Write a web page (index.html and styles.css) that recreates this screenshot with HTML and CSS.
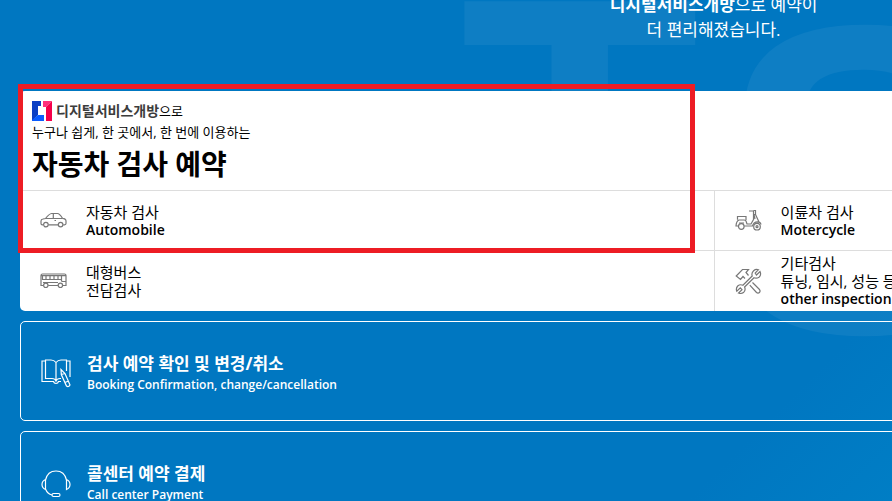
FILE: index.html
```html
<!DOCTYPE html>
<html lang="ko">
<head>
    <meta charset="UTF-8">
    <meta name="viewport" content="width=device-width, initial-scale=1.0">
    <title>자동차 검사 예약</title>
    <link rel="stylesheet" href="styles.css">
</head>
<body>
    <div class="page">
        <div class="watermark" aria-hidden="true"><span class="mark-t">T</span><span class="mark-s">S</span></div>

        <header class="hero">
            <p><strong>디지털서비스개방</strong>으로 예약이<br>더 편리해졌습니다.</p>
        </header>

        <main class="content">
            <section class="card">
                <div class="card-head">
                    <div class="brand">
                        <svg class="brand-logo" viewBox="0 0 20 20" aria-hidden="true">
                            <path d="M0 0H9V5H6V14L0 20Z" fill="#0b3fc4"/>
                            <path d="M0 20V19L6 14H12V20Z" fill="#0a5cff"/>
                            <path d="M11 0H20L14 6H11Z" fill="#ff2f7b"/>
                            <path d="M14 6L20 0V20H14Z" fill="#f5004a"/>
                        </svg>
                        <strong>디지털서비스개방</strong><span>으로</span>
                    </div>
                    <p>누구나 쉽게, 한 곳에서, 한 번에 이용하는</p>
                    <h1>자동차 검사 예약</h1>
                </div>
                <nav class="menu">
                    <a class="menu-item" href="#">
                        <svg class="menu-icon" viewBox="0 0 27 27" aria-hidden="true">
                            <path d="M3.300 17.800H2.400Q1 17.800 1 16.400V14Q1 12.300 3 12L5.500 11.500Q9.300 6.700 11.600 6.500H17.500Q19.500 6.500 22.500 11.300Q26 11.600 26 14V16.600Q26 17.800 24.500 17.800H23.200M8.400 17.800H18"/>
                            <path d="M5.500 11.500H22M13.300 6.800V11.300M14.500 13.500H16"/>
                            <circle cx="5.900" cy="17.600" r="2.300"/>
                            <circle cx="20.600" cy="17.600" r="2.300"/>
                        </svg>
                        <span>자동차 검사<b>Automobile</b></span>
                    </a>
                    <a class="menu-item" href="#">
                        <svg class="menu-icon" viewBox="0 0 27 27" aria-hidden="true">
                            <path d="M3.300 17.500H1V7.500Q1 6 2.500 6H24.500Q26 6 26 7.500V17.500H23M8.200 17.500H18M1 7.700H26"/>
                            <path d="M2.500 8V11.500H21L22 13.500H26M6 8V11.500M10 8V11.500M14 8V11.500M18 8V11.500M21.500 8V12.500M3 14.500H18"/>
                            <circle cx="5.800" cy="17.300" r="2.200"/>
                            <circle cx="20.400" cy="17.300" r="2.200"/>
                        </svg>
                        <span>대형버스<br>전담검사</span>
                    </a>
                    <a class="menu-item" href="#">
                        <svg class="menu-icon" viewBox="0 0 27 27" aria-hidden="true">
                            <path d="M14 4H18.500V7.500H20.500V3.500H18.500M19 7.500L20 12M20.500 7.500L24 15M18.500 7.500V12.500L16 17H12L11 14Q10.500 13 9 13H4Q1.300 14 1 19H3.500M9.200 19H17.500Q18.500 15 22.500 14.800Q25.500 14.800 26 17.500"/>
                            <path d="M2.500 12.800V9.500H11V13M4 16H9"/>
                            <circle cx="6.300" cy="19.500" r="2.800"/>
                            <circle cx="22" cy="19.700" r="3.300"/>
                            <circle cx="22" cy="19.700" r="1"/>
                        </svg>
                        <span>이륜차 검사<b>Motercycle</b></span>
                    </a>
                    <a class="menu-item" href="#">
                        <svg class="menu-icon" viewBox="0 0 27 27" aria-hidden="true">
                            <path d="M10 10.500L8 8.500L5.500 11.500L1.200 8L7.500 1.500H13.500L11 4.500L13.500 7.500"/>
                            <path d="M14.800 17.200L21.500 24.500Q23 25.800 24.500 24.500Q25.800 23 24.500 21.500L17.500 14.500"/>
                            <path d="M23.500 1.700L20.200 5L21.500 7L25 3.500Q26.600 7 24 9.200Q21.600 10.800 19 9.800L9.600 19Q11 22.500 8.500 24.600Q6.300 26.200 3.500 25L7 21.700L5.300 19.900L1.800 23.300Q.6 20.400 2.700 18Q5 16 7.900 17.200L17.200 8Q16.200 5 18.600 2.700Q20.700 .8 23.500 1.700Z"/>
                        </svg>
                        <span>기타검사<br>튜닝, 임시, 성능 등<b>other inspection</b></span>
                    </a>
                </nav>
                <div class="highlight"></div>
            </section>

            <a class="box" href="#">
                <svg class="box-icon" viewBox="0 0 30 30" aria-hidden="true">
                    <path d="M15 4.500Q13 2 10 2H4.500V20.500H11Q14 20.500 15 23Q16 20.500 19 20.500H20M15 4.500V23M15 4.500Q17 2 20 2H25.500V13M4 3H1V23.500H12.500Q13 25.500 15 25.500Q17 25.500 17.500 23.500H20M26 3H29V19"/>
                    <path d="M20 11.500L20.300 16.500L25.500 28Q27.500 29.500 29 27L24 15.500ZM20.300 16.500L24 15.500M24 24.500L27.500 23"/>
                </svg>
                <span class="box-text"><strong>검사 예약 확인 및 변경/취소</strong><small>Booking Confirmation, change/cancellation</small></span>
            </a>
            <a class="box" href="#">
                <svg class="box-icon" viewBox="0 0 30 30" aria-hidden="true">
                    <path d="M4.500 12Q6.500 3 15 3Q23.500 3 25.500 12M4.500 11.500V21.500Q1 20 1 16.500Q1 13 4.500 11.500ZM25.500 11.500V21.500Q29 20 29 16.500Q29 13 25.500 11.500ZM4.500 21Q6.500 26 11 27"/>
                    <rect x="11" y="25.500" width="8" height="3" rx="1.500"/>
                </svg>
                <span class="box-text"><strong>콜센터 예약 결제</strong><small>Call center Payment</small></span>
            </a>
        </main>
    </div>
</body>
</html>
```

FILE: styles.css
```css
* {
    margin: 0;
    padding: 0;
    box-sizing: border-box;
}
html {
    overflow: hidden;
}
body {
    background-color: #0077c1;
    font-family: "Open Sans", "Noto Sans CJK KR", sans-serif;
    font-size: 15px;
    line-height: 18px;
    color: #000;
}
a {
    color: inherit;
    text-decoration: none;
}
/* the board is wider than the window and runs off its right edge */
.page {
    position: relative;
    width: 160vw;
    background: linear-gradient(135deg, #0077c1 60%, #0091d0);
    overflow: hidden;
}
.watermark {
    position: absolute;
    top: -61px;
    left: 460px;
    font: bold 392px/1 "Liberation Sans", sans-serif;
    color: rgba(255, 255, 255, 0.055);
}
.mark-s {
    position: absolute;
    top: 21px;
    left: 258px;
    font-size: 440px;
}
.hero {
    position: relative;
    display: flex;
    flex-direction: column;
    justify-content: flex-end;
    height: 91px;
    padding-bottom: 49px;
    font-size: 17px;
    line-height: 25px;
    text-align: center;
    color: #fff;
}
.content {
    position: relative;
    display: flex;
    flex-direction: column;
    gap: 10px;
    padding: 0 20px 20px;
}
.card {
    position: relative;
    background-color: #fff;
    border-radius: 5px;
}
.card-head {
    padding: 10px 12px 4px;
    font-size: 13px;
}
.brand {
    display: flex;
    align-items: center;
    height: 20px;
}
.brand-logo {
    width: 20px;
    height: 20px;
    margin-right: 4px;
}
.brand strong {
    font-size: 14px;
    color: #3c3c3c;
}
.card-head p {
    line-height: 22px;
}
.card-head h1 {
    font-size: 28px;
    line-height: 43px;
}
.menu {
    display: grid;
    grid-template-columns: 1fr 1fr;
    grid-template-rows: auto auto;
    grid-auto-flow: column;
}
.menu-item {
    display: grid;
    grid-template-columns: 30px 1fr;
    align-items: center;
    gap: 16px;
    min-height: 60px;
    padding: 3px 20px;
    border-top: 1px solid #ddd;
}
.menu-item:nth-child(n+3) {
    border-left: 1px solid #ddd;
}
.menu-item b {
    display: block;
    font-size: 14px;
    font-weight: 600;
}
.menu-icon {
    width: 27px;
    height: 27px;
    fill: none;
    stroke: #777;
    stroke-width: 1.2;
}
.highlight {
    position: absolute;
    top: -7px;
    left: -2px;
    width: 48.8%;
    height: 169px;
    border: 5px solid #ed1c24;
}
.box {
    display: grid;
    grid-template-columns: 30px 1fr;
    align-items: center;
    gap: 16px;
    height: 100px;
    padding: 4px 20px 0;
    border: 1px solid #fff;
    border-radius: 5px;
    color: #fff;
}
.box-icon {
    width: 30px;
    height: 30px;
    fill: none;
    stroke: #fff;
    stroke-width: 1.2;
}
.box-text strong,
.box-text small {
    display: block;
}
.box-text strong {
    font-size: 17px;
    line-height: 24px;
}
.box-text small {
    font-size: 12px;
    font-weight: 600;
}
```
